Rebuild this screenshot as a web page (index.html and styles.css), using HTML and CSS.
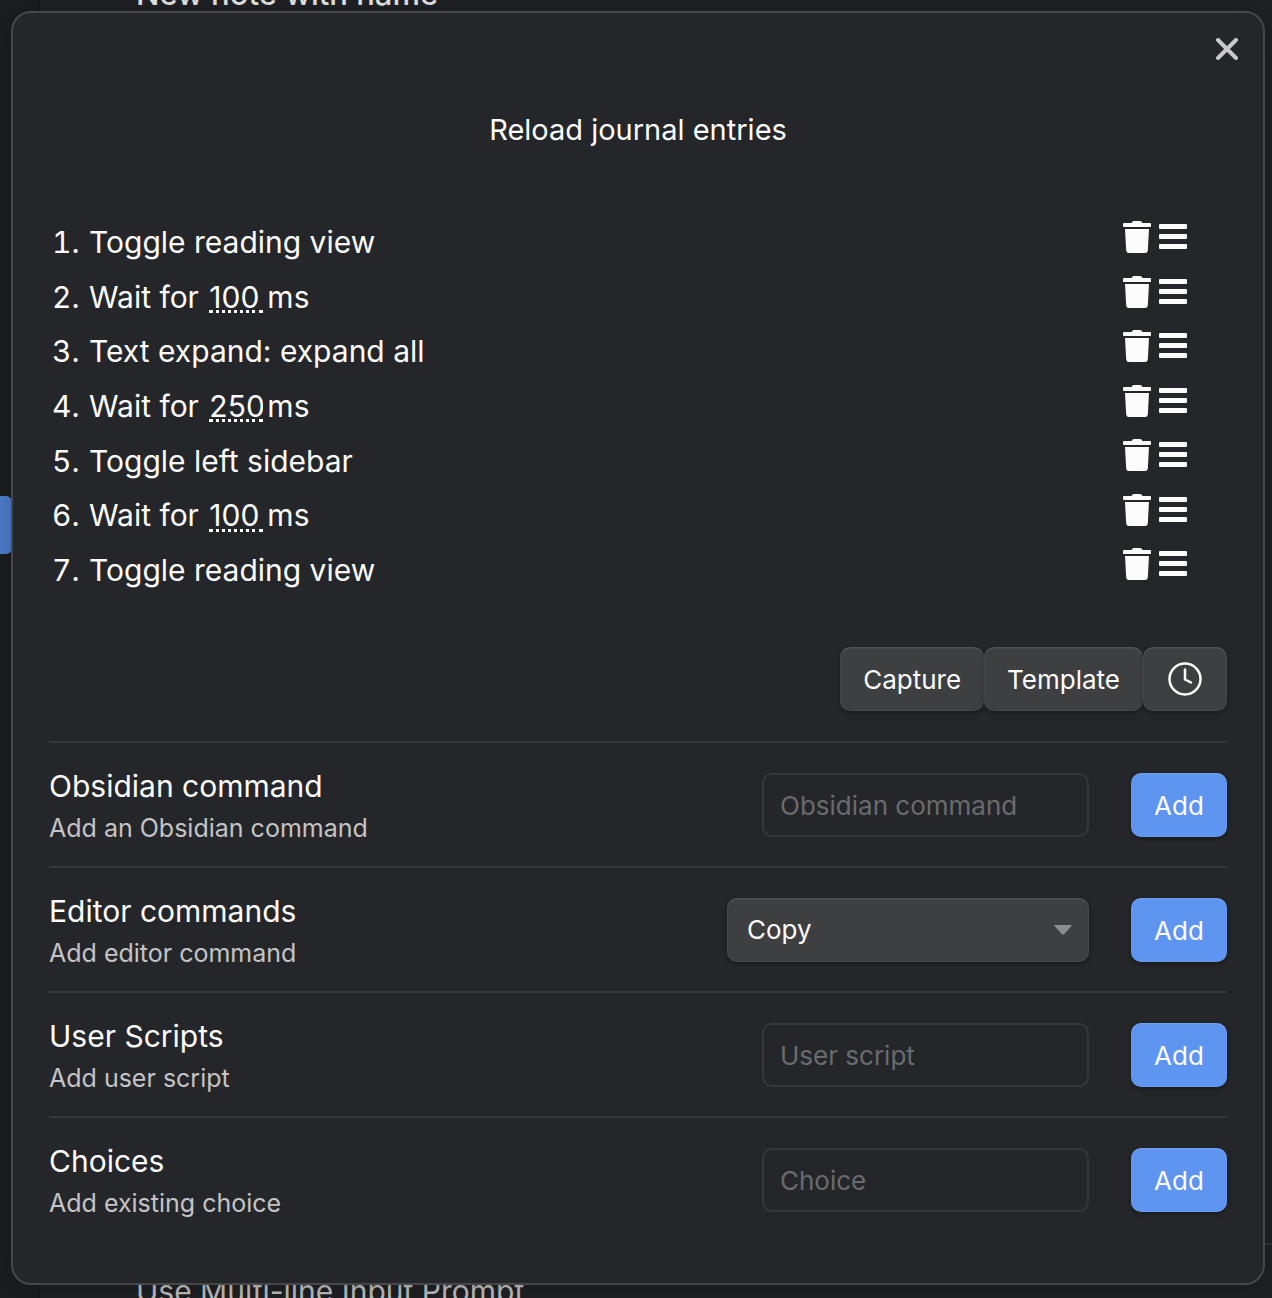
FILE: index.html
```html
<!DOCTYPE html>
<html lang="en">
<head>
<meta charset="utf-8">
<title>Reload journal entries</title>
<link rel="stylesheet" href="styles.css">
</head>
<body>
<svg class="sprite" aria-hidden="true">
  <symbol id="trash" viewBox="0 0 28 32">
    <path d="M1 2H8.500Q9.300 0 11 0H17Q18.700 0 19.500 2H27Q28 2 28 3V5Q28 6 27 6H1Q0 6 0 5V3Q0 2 1 2Z"/>
    <path d="M2 8H26L24.800 29.500Q24.600 32 22 32H6Q3.400 32 3.200 29.500Z"/>
  </symbol>
  <symbol id="bars" viewBox="0 0 28 32">
    <rect y="3" width="28" height="5" rx="1"/>
    <rect y="13" width="28" height="5" rx="1"/>
    <rect y="23" width="28" height="5" rx="1"/>
  </symbol>
</svg>

<div class="app" aria-hidden="true">
  <div class="app-nav"><span class="nav-active"></span></div>
  <div class="app-main">
    <div class="app-row app-row-first">New note with name</div>
    <div class="app-row app-row-last">Use Multi-line Input Prompt</div>
  </div>
</div>

<main class="modal" role="dialog" aria-labelledby="title">
  <button class="close" type="button" aria-label="Close">
    <svg width="22" height="22" viewBox="0 0 22 22"><path d="M2 2L20 20M20 2L2 20"/></svg>
  </button>
  <h1 class="title" id="title">Reload journal entries</h1>

  <ol class="commands">
    <li class="command"><span class="num">1.</span><span class="label">Toggle reading view</span><button class="icon" type="button" aria-label="Delete"><svg><use href="#trash"/></svg></button><button class="icon" type="button" aria-label="Reorder"><svg><use href="#bars"/></svg></button></li>
    <li class="command"><span class="num">2.</span><label class="label">Wait for <input class="delay" type="text" value="100">ms</label><button class="icon" type="button" aria-label="Delete"><svg><use href="#trash"/></svg></button><button class="icon" type="button" aria-label="Reorder"><svg><use href="#bars"/></svg></button></li>
    <li class="command"><span class="num">3.</span><span class="label">Text expand: expand all</span><button class="icon" type="button" aria-label="Delete"><svg><use href="#trash"/></svg></button><button class="icon" type="button" aria-label="Reorder"><svg><use href="#bars"/></svg></button></li>
    <li class="command"><span class="num">4.</span><label class="label">Wait for <input class="delay" type="text" value="250">ms</label><button class="icon" type="button" aria-label="Delete"><svg><use href="#trash"/></svg></button><button class="icon" type="button" aria-label="Reorder"><svg><use href="#bars"/></svg></button></li>
    <li class="command"><span class="num">5.</span><span class="label">Toggle left sidebar</span><button class="icon" type="button" aria-label="Delete"><svg><use href="#trash"/></svg></button><button class="icon" type="button" aria-label="Reorder"><svg><use href="#bars"/></svg></button></li>
    <li class="command"><span class="num">6.</span><label class="label">Wait for <input class="delay" type="text" value="100">ms</label><button class="icon" type="button" aria-label="Delete"><svg><use href="#trash"/></svg></button><button class="icon" type="button" aria-label="Reorder"><svg><use href="#bars"/></svg></button></li>
    <li class="command"><span class="num">7.</span><span class="label">Toggle reading view</span><button class="icon" type="button" aria-label="Delete"><svg><use href="#trash"/></svg></button><button class="icon" type="button" aria-label="Reorder"><svg><use href="#bars"/></svg></button></li>
  </ol>

  <div class="actions">
    <button class="btn" type="button">Capture</button>
    <button class="btn" type="button">Template</button>
    <button class="btn" type="button" aria-label="Wait"><svg class="clock" width="38" height="36" viewBox="0 0 38 36"><circle cx="19" cy="17" r="15.500"/><path d="M19 7.500V17.500L25 20.500"/></svg></button>
  </div>

  <section class="setting">
    <div class="info"><label class="name" for="obsidian">Obsidian command</label><div class="desc">Add an Obsidian command</div></div>
    <input class="field" id="obsidian" type="text" placeholder="Obsidian command">
    <button class="btn btn-cta" type="button">Add</button>
  </section>
  <section class="setting">
    <div class="info"><label class="name" for="editor">Editor commands</label><div class="desc">Add editor command</div></div>
    <div class="dropdown">
      <select class="btn select" id="editor"><option>Copy</option><option>Cut</option><option>Paste</option></select>
      <svg class="arrow" width="18" height="10" viewBox="0 0 18 10"><path d="M1 0H17Q18 0 17.500 1L10 9.300Q9 10 8 9.300L.5 1Q0 0 1 0Z"/></svg>
    </div>
    <button class="btn btn-cta" type="button">Add</button>
  </section>
  <section class="setting">
    <div class="info"><label class="name" for="script">User Scripts</label><div class="desc">Add user script</div></div>
    <input class="field" id="script" type="text" placeholder="User script">
    <button class="btn btn-cta" type="button">Add</button>
  </section>
  <section class="setting">
    <div class="info"><label class="name" for="choice">Choices</label><div class="desc">Add existing choice</div></div>
    <input class="field" id="choice" type="text" placeholder="Choice">
    <button class="btn btn-cta" type="button">Add</button>
  </section>
</main>
</body>
</html>
```
FILE: styles.css
```css
* { box-sizing: border-box; }

body {
  margin: 0;
  padding: 11px 7px 13px 11px;
  position: relative;
  background: #202124;
  color: #fcfcfc;
  font-family: Inter, "Liberation Sans", sans-serif;
  font-size: 30px;
  line-height: 36px;
}

button, input, select { font: inherit; color: inherit; margin: 0; }
svg { display: block; }
.sprite { position: absolute; width: 0; height: 0; }

/* settings window behind the dialog */
.app {
  position: absolute;
  inset: 0;
  display: flex;
  overflow: hidden;
}
.app-nav {
  width: 40px;
  padding-top: 496px;
  background: #1c1d1f;
  border-right: 2px solid #18191b;
}
.nav-active {
  display: block;
  width: 12px;
  height: 58px;
  border-radius: 0 6px 6px 0;
  background: #4f7fcf;
}
.app-main {
  flex: 1;
  display: flex;
  flex-direction: column;
  justify-content: space-between;
  margin: -24px 0 -11px;
}
.app-row { padding-left: 96px; color: #e6e6e6; }
.app-row-first { font-size: 31px; font-weight: 500; }
.app-row-last {
  padding-top: 28px;
  border-top: 2px solid #303134;
  color: #c4c4c4;
}

.modal {
  position: relative;
  padding: 0 36px 42px;
  border: 2px solid #46474a;
  border-radius: 20px;
  background: #25262a;
  box-shadow: 0 4px 30px rgba(0, 0, 0, 0.25);
}
.close {
  position: absolute;
  top: 15px;
  right: 15px;
  padding: 10px;
  border: 0;
  background: none;
}
.close path { fill: none; stroke: #c9c9ca; stroke-width: 4; stroke-linecap: round; }

.title {
  margin: 0;
  padding: 97px 0 65px;
  font-size: 29px;
  line-height: 40px;
  font-weight: 400;
  text-align: center;
}

.commands {
  display: grid;
  grid-auto-rows: 1fr;
  min-height: 382px;
  margin: 0;
  padding: 0 40px 0 3px;
  list-style: none;
}
.command { display: flex; align-items: center; gap: 8px; }
.num { width: 29px; font-variant-numeric: tabular-nums; }
.label { flex: 1; }
.delay {
  width: 54px;
  height: 30px;
  margin: 0 4px 0 2px;
  padding: 0;
  border: 0;
  border-bottom: 3px dotted #fcfcfc;
  border-radius: 0;
  background: none;
  line-height: 26px;
}
.icon {
  align-self: flex-start;
  margin-top: 6px;
  padding: 0;
  border: 0;
  background: none;
}
.icon svg { width: 28px; height: 32px; fill: #fcfcfc; }

.actions {
  display: flex;
  justify-content: flex-end;
  padding: 50px 0 30px;
}
.btn {
  height: 64px;
  padding: 2px 23px 0;
  border: 0;
  border-radius: 10px;
  background: #3e3f41;
  box-shadow: inset 0 2px 1px rgba(255, 255, 255, 0.06), inset 0 0 0 1px rgba(255, 255, 255, 0.05), 0 2px 4px rgba(0, 0, 0, 0.35);
  font-size: 26px;
  line-height: 32px;
}
.clock { fill: none; stroke: #fcfcfc; stroke-width: 2.5; stroke-linecap: round; stroke-linejoin: round; }

.setting {
  display: flex;
  align-items: center;
  min-height: 125px;
  border-top: 2px solid #36373b;
}
.info { flex: 1; }
.name { display: block; line-height: 46px; }
.desc { color: #c4c4c6; font-size: 25px; line-height: 38px; }
.field {
  width: 327px;
  height: 64px;
  padding: 2px 16px 0;
  border: 2px solid #36373b;
  border-radius: 10px;
  background: #25262a;
  font-size: 26px;
}
.field::placeholder { color: #6a6b6d; opacity: 1; }
.dropdown { position: relative; width: 362px; }
.select { width: 100%; padding: 0 20px; appearance: none; }
.arrow { position: absolute; top: 27px; right: 17px; fill: #8c8d8f; pointer-events: none; }
.btn-cta { width: 96px; margin-left: 42px; background: #5e95f0; }
```
